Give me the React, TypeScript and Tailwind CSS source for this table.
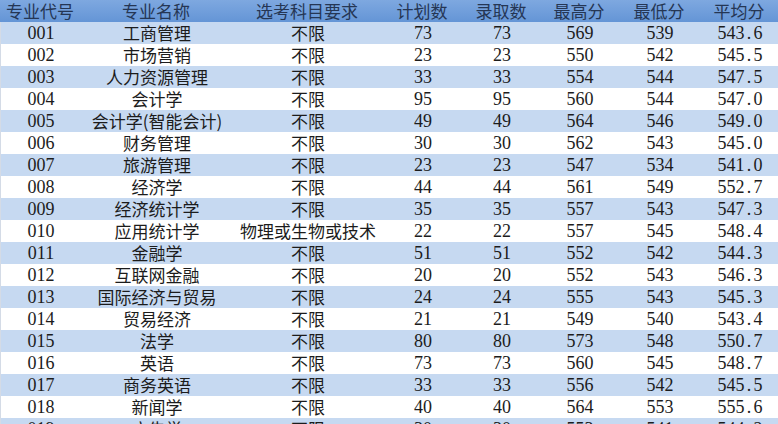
import React from "react"

const cols = "grid grid-cols-[80px_152px_150px_80px_78px_78px_82px_78px]"

const headers = ["专业代号", "专业名称", "选考科目要求", "计划数", "录取数", "最高分", "最低分", "平均分"]

const rows: string[][] = [
  ["001", "工商管理", "不限", "73", "73", "569", "539", "543.6"],
  ["002", "市场营销", "不限", "23", "23", "550", "542", "545.5"],
  ["003", "人力资源管理", "不限", "33", "33", "554", "544", "547.5"],
  ["004", "会计学", "不限", "95", "95", "560", "544", "547.0"],
  ["005", "会计学(智能会计)", "不限", "49", "49", "564", "546", "549.0"],
  ["006", "财务管理", "不限", "30", "30", "562", "543", "545.0"],
  ["007", "旅游管理", "不限", "23", "23", "547", "534", "541.0"],
  ["008", "经济学", "不限", "44", "44", "561", "549", "552.7"],
  ["009", "经济统计学", "不限", "35", "35", "557", "543", "547.3"],
  ["010", "应用统计学", "物理或生物或技术", "22", "22", "557", "545", "548.4"],
  ["011", "金融学", "不限", "51", "51", "552", "542", "544.3"],
  ["012", "互联网金融", "不限", "20", "20", "552", "543", "546.3"],
  ["013", "国际经济与贸易", "不限", "24", "24", "555", "543", "545.3"],
  ["014", "贸易经济", "不限", "21", "21", "549", "540", "543.4"],
  ["015", "法学", "不限", "80", "80", "573", "548", "550.7"],
  ["016", "英语", "不限", "73", "73", "560", "545", "548.7"],
  ["017", "商务英语", "不限", "33", "33", "556", "542", "545.5"],
  ["018", "新闻学", "不限", "40", "40", "564", "553", "555.6"],
  ["019", "广告学", "不限", "30", "30", "553", "541", "544.2"],
]

const cjk = "font-[family-name:'Noto_Sans_CJK_SC',sans-serif]"
const num = "font-[family-name:'Liberation_Serif',serif]"

// splits "543.6" so the dot takes a full digit cell, like the sheet's font
const Num = ({ v }: { v: string }) => {
  if (!v.includes(".")) return <>{v}</>
  const [a, b] = v.split(".")
  return (
    <>
      {a}
      <span className="inline-block w-[9px] text-center">.</span>
      {b}
    </>
  )
}

const App = () => {
  return (
    <div className="h-[424px] w-[778px] overflow-hidden bg-white text-[#1c1c1c]">
      {/* HEADER */}
      <div className={`${cols} h-[22px] bg-gradient-to-b from-[#7ea8e0] to-[#6495d6] text-[#253654] text-[17px] leading-[22px] ${cjk}`}>
        {headers.map((h) => (
          <div key={h} className="text-center whitespace-nowrap">{h}</div>
        ))}
      </div>

      {/* ROWS */}
      {rows.map((r, i) => (
        <div
          key={r[0]}
          className={`${cols} h-[22px] leading-[22px] border-l border-[#d4dbe6] ${i % 2 === 0 ? "bg-[#c6d9f1]" : "bg-white"}`}
        >
          {r.map((c, j) => (
            <div
              key={j}
              className={`text-center whitespace-nowrap ${j === 1 || j === 2 ? `${cjk} text-[17px]` : `${num} text-[18px]`}`}
            >
              {j === 1 || j === 2 ? c : <Num v={c} />}
            </div>
          ))}
        </div>
      ))}
    </div>
  )
}

export default App
